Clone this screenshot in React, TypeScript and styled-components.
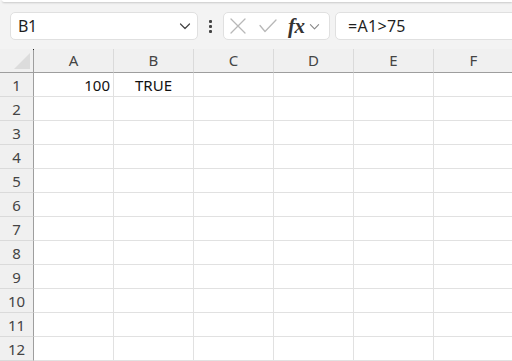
import React from 'react';
import styled, { createGlobalStyle } from 'styled-components';

const GlobalStyle = createGlobalStyle`
  html, body {
    margin: 0;
    padding: 0;
    background: #f3f3f3;
    overflow: hidden;
  }
  body {
    font-family: 'Noto Sans', 'Open Sans', sans-serif;
  }
`;

const COLS = ['A', 'B', 'C', 'D', 'E', 'F'];
const ROWS = Array.from({ length: 12 }, (_, i) => i + 1);

const Page = styled.div`
  width: 512px;
  height: 361px;
  background: #f3f3f3;
  display: flex;
  flex-direction: column;
`;

const RibbonEdge = styled.div`
  height: 2px;
  margin: 0 0 0 2px;
  background: #ffffff;
  border-radius: 0 0 0 6px;
  box-shadow: 0 1px 2px rgba(0, 0, 0, 0.18);
`;

const FormulaBar = styled.div`
  display: flex;
  align-items: center;
  height: 48px;
  padding: 2px 0 0 10px;
  box-sizing: border-box;
`;

const Field = styled.div<{ $w?: number; $grow?: boolean }>`
  display: flex;
  align-items: center;
  height: 28px;
  box-sizing: border-box;
  background: #ffffff;
  border: 1px solid #e0e0e0;
  border-radius: 5px;
  width: ${(p) => (p.$w ? `${p.$w}px` : 'auto')};
  flex: ${(p) => (p.$grow ? '1' : 'none')};
  ${(p) => (p.$grow ? 'margin-right: -6px;' : '')}
`;

const NameText = styled.span`
  flex: 1;
  padding-left: 7px;
  font-size: 16px;
  color: #1f1f1f;
  letter-spacing: -0.3px;
`;

const FormulaText = styled.span`
  padding-left: 12px;
  font-size: 16px;
  color: #1f1f1f;
  letter-spacing: 0.3px;
`;

const Grip = styled.div`
  width: 25px;
  display: flex;
  flex-direction: column;
  align-items: center;
  gap: 2px;
  span {
    width: 3px;
    height: 3px;
    background: #444;
    border-radius: 1px;
  }
`;

const Fx = styled.span`
  font-family: 'Liberation Serif', 'DejaVu Serif', serif;
  font-style: italic;
  font-weight: bold;
  font-size: 21px;
  line-height: 1;
  color: #333;
  margin-left: 11px;
  letter-spacing: -0.5px;
`;

const IconSlot = styled.div<{ $ml?: number; $mr?: number }>`
  display: flex;
  align-items: center;
  margin-left: ${(p) => p.$ml ?? 0}px;
  margin-right: ${(p) => p.$mr ?? 0}px;
`;

const Gap = styled.div<{ $w: number }>`
  width: ${(p) => p.$w}px;
  flex: none;
`;

const Sheet = styled.div`
  display: grid;
  grid-template-columns: 34px repeat(6, 80px);
  grid-template-rows: 24px repeat(12, 24px);
  background: #ffffff;
  flex: 1;
`;

const Corner = styled.div`
  position: relative;
  background: #f0f0f0;
  border-right: 1px solid #9e9e9e;
  border-bottom: 1px solid #9e9e9e;
  box-sizing: border-box;
  &::after {
    content: '';
    position: absolute;
    right: 3px;
    bottom: 3px;
    width: 0;
    height: 0;
    border-left: 16px solid transparent;
    border-bottom: 16px solid #dcdcdc;
  }
  &::before {
    content: '';
    position: absolute;
    right: -1px;
    top: 0;
    width: 1px;
    height: 1px;
    background: #222;
  }
`;

const ColHead = styled.div`
  background: #f0f0f0;
  border-right: 1px solid #dadada;
  border-bottom: 1px solid #9e9e9e;
  box-sizing: border-box;
  display: flex;
  align-items: center;
  justify-content: center;
  font-size: 15px;
  color: #444;
  padding-bottom: 1px;
`;

const RowHead = styled.div`
  background: #f0f0f0;
  border-right: 1px solid #9e9e9e;
  border-bottom: 1px solid #dadada;
  box-sizing: border-box;
  display: flex;
  align-items: center;
  justify-content: center;
  font-size: 15px;
  color: #444;
`;

const Cell = styled.div<{ $align?: 'left' | 'right' | 'center' }>`
  border-right: 1px solid #e1e1e1;
  border-bottom: 1px solid #e1e1e1;
  box-sizing: border-box;
  display: flex;
  align-items: center;
  justify-content: ${(p) =>
    p.$align === 'right' ? 'flex-end' : p.$align === 'center' ? 'center' : 'flex-start'};
  padding: 0 3px;
  font-size: 15px;
  color: #111;
`;

const Chevron = ({ size = 12, color = '#444' }: { size?: number; color?: string }) => (
  <svg width={size} height={size} viewBox="0 0 12 12" fill="none">
    <path d="M1.5 4 L6 8.5 L10.5 4" stroke={color} strokeWidth="1.2" strokeLinecap="round" strokeLinejoin="round" />
  </svg>
);

const Cross = () => (
  <svg width="16" height="16" viewBox="0 0 16 16" fill="none">
    <path d="M1 1 L15 15 M15 1 L1 15" stroke="#b8b8b8" strokeWidth="1.3" strokeLinecap="round" />
  </svg>
);

const Check = () => (
  <svg width="18" height="14" viewBox="0 0 18 14" fill="none">
    <path d="M1 6.5 L6 12.5 L17 1" stroke="#b8b8b8" strokeWidth="1.3" strokeLinecap="round" strokeLinejoin="round" />
  </svg>
);

const cellValue = (row: number, col: string) => {
  if (row === 1 && col === 'A') return { text: '100', align: 'right' as const };
  if (row === 1 && col === 'B') return { text: 'TRUE', align: 'center' as const };
  return { text: '', align: 'left' as const };
};

export default function App() {
  return (
    <>
      <GlobalStyle />
      <Page>
        <RibbonEdge />
        <FormulaBar>
          <Field $w={188}>
            <NameText>B1</NameText>
            <IconSlot $mr={6}>
              <Chevron />
            </IconSlot>
          </Field>
          <Grip>
            <span />
            <span />
            <span />
          </Grip>
          <Field $w={107}>
            <IconSlot $ml={6}>
              <Cross />
            </IconSlot>
            <IconSlot $ml={13}>
              <Check />
            </IconSlot>
            <Fx>fx</Fx>
            <IconSlot $ml={4}>
              <Chevron size={11} color="#888" />
            </IconSlot>
          </Field>
          <Gap $w={5} />
          <Field $grow>
            <FormulaText>=A1&gt;75</FormulaText>
          </Field>
        </FormulaBar>
        <Sheet>
          <Corner />
          {COLS.map((c) => (
            <ColHead key={c}>{c}</ColHead>
          ))}
          {ROWS.map((r) => (
            <React.Fragment key={r}>
              <RowHead>{r}</RowHead>
              {COLS.map((c) => {
                const v = cellValue(r, c);
                return (
                  <Cell key={c} $align={v.align}>
                    {v.text}
                  </Cell>
                );
              })}
            </React.Fragment>
          ))}
        </Sheet>
      </Page>
    </>
  );
}
